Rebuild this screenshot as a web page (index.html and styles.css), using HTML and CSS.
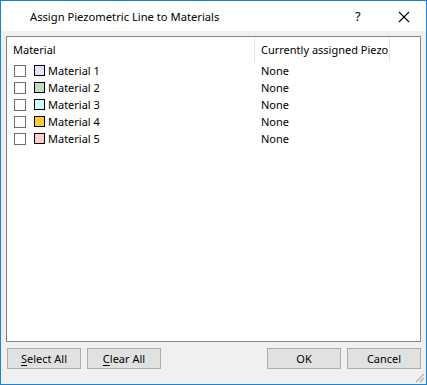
FILE: index.html
```html
<!DOCTYPE HTML>
<html>

<head>
    <title>Assign Piezometric Line to Materials</title>
    <meta name="viewport" content="width=device-width, initial-scale=1">
    <link rel="stylesheet" href="styles.css">
</head>

<body>
    <div class="window">
        <div class="titlebar">
            <span class="title">Assign Piezometric Line to Materials</span>
            <span class="help">?</span>
            <span class="close">
                <svg width="12" height="12" viewBox="0 0 12 12">
                    <path d="M1 1 L11 11 M11 1 L1 11" stroke="#000" stroke-width="1.1" fill="none" />
                </svg>
            </span>
        </div>
        <div class="client">
            <div class="listbox">
                <div class="header">
                    <div class="col col-mat">Material</div>
                    <div class="col col-piezo">Currently assigned Piezo</div>
                </div>
                <div class="row">
                    <div class="col col-mat"><span class="check"></span><span class="swatch swatch-1"></span>Material 1</div>
                    <div class="col col-piezo">None</div>
                </div>
                <div class="row">
                    <div class="col col-mat"><span class="check"></span><span class="swatch swatch-2"></span>Material 2</div>
                    <div class="col col-piezo">None</div>
                </div>
                <div class="row">
                    <div class="col col-mat"><span class="check"></span><span class="swatch swatch-3"></span>Material 3</div>
                    <div class="col col-piezo">None</div>
                </div>
                <div class="row">
                    <div class="col col-mat"><span class="check"></span><span class="swatch swatch-4"></span>Material 4</div>
                    <div class="col col-piezo">None</div>
                </div>
                <div class="row">
                    <div class="col col-mat"><span class="check"></span><span class="swatch swatch-5"></span>Material 5</div>
                    <div class="col col-piezo">None</div>
                </div>
            </div>
            <div class="buttons">
                <button class="button"><u>S</u>elect All</button>
                <button class="button"><u>C</u>lear All</button>
                <span class="spacer"></span>
                <button class="button">OK</button>
                <button class="button">Cancel</button>
            </div>
            <svg class="grip" width="11" height="11" viewBox="0 0 11 11">
                <path d="M10 2 L2 10 M10 6 L6 10 M10 10 L10 10" stroke="#b4b4b4" stroke-width="1.4" fill="none" />
            </svg>
        </div>
    </div>
</body>

</html>
```

FILE: styles.css
```css
html {
    font-family: "Noto Sans", "Open Sans", sans-serif;
    font-size: 11px;
    color: #000;
}

body {
    margin: 0;
}

.window {
    width: 427px;
    height: 385px;
    box-sizing: border-box;
    border: 1px solid #1883d7;
    display: flex;
    flex-direction: column;
}

.titlebar {
    height: 30px;
    background-color: #fff;
    display: flex;
    align-items: center;
    flex-shrink: 0;
}

.title {
    padding-left: 29px;
    flex: 1;
    font-size: 11.2px;
}

.help {
    width: 12px;
    margin-right: 31px;
    font-size: 13px;
}

.close {
    display: flex;
    margin-right: 16px;
    margin-top: 1px;
}

.client {
    flex: 1;
    position: relative;
    background-color: #f0f0f0;
    padding: 5px 5px 15px 5px;
    display: flex;
    flex-direction: column;
}

.listbox {
    flex: 1;
    background-color: #fff;
    border: 1px solid #828790;
}

.header {
    height: 25px;
    display: flex;
}

.header .col {
    border-right: 1px solid #e5e5e5;
    line-height: 25px;
}

.col {
    box-sizing: border-box;
    padding-left: 6px;
    white-space: nowrap;
}

.col-mat {
    width: 248px;
}

.col-piezo {
    width: 135px;
}

.row {
    height: 17px;
    display: flex;
    align-items: center;
}

.row .col-mat {
    display: flex;
    align-items: center;
    padding-left: 7px;
}

.check {
    width: 12px;
    height: 12px;
    box-sizing: border-box;
    border: 1px solid #707070;
    margin-right: 8px;
}

.swatch {
    width: 11px;
    height: 11px;
    box-sizing: border-box;
    border: 1px solid #000;
    margin-right: 3px;
}

.swatch-1 { background-color: #e4e4fa; }
.swatch-2 { background-color: #c0dcc0; }
.swatch-3 { background-color: #ccffff; }
.swatch-4 { background-color: #ffcc33; }
.swatch-5 { background-color: #ffcccc; }

.buttons {
    margin-top: 6px;
    padding-left: 1px;
    display: flex;
    gap: 6px;
}

.spacer {
    flex: 1;
}

.button {
    width: 74px;
    height: 21px;
    padding: 0;
    font-family: inherit;
    font-size: 11px;
    color: #000;
    background-color: #e1e1e1;
    border: 1px solid #adadad;
    border-radius: 0;
}

.button u {
    text-underline-offset: 2px;
}

.grip {
    position: absolute;
    right: 1px;
    bottom: 1px;
}
```
